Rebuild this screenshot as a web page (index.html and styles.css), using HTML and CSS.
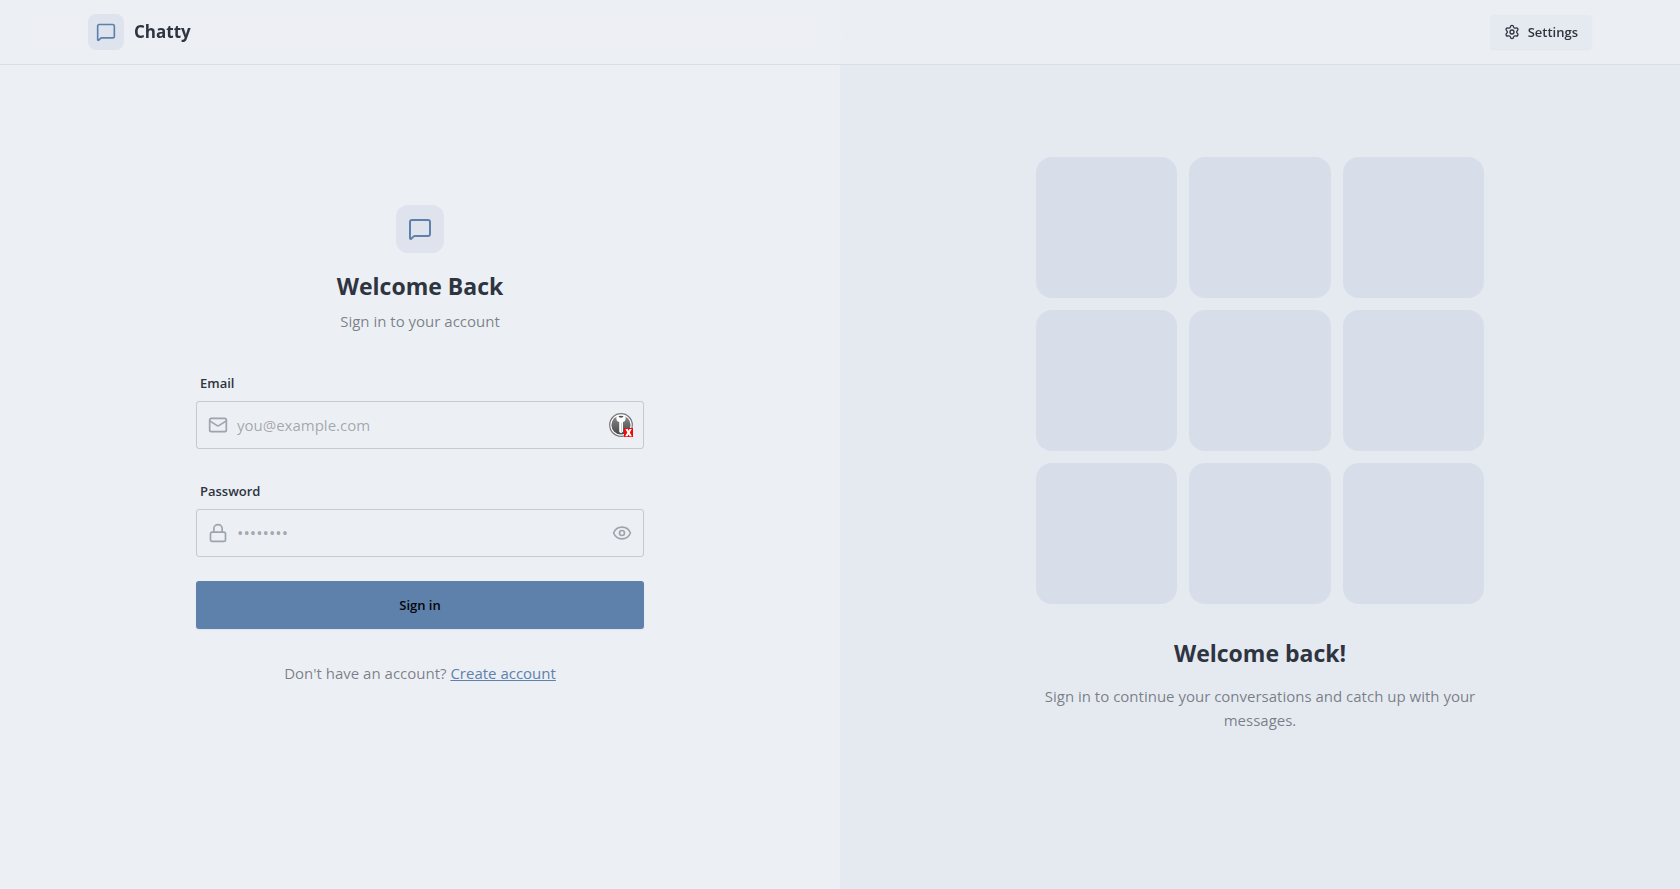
FILE: index.html
```html
<!DOCTYPE html>
<html lang="en">
<head>
<meta charset="utf-8">
<meta name="viewport" content="width=device-width, initial-scale=1">
<title>Chatty</title>
<link rel="stylesheet" href="styles.css">
</head>
<body>
<header class="navbar">
  <div class="navbar-inner">
    <a class="brand" href="#">
      <span class="brand-mark">
        <svg class="icon icon-md" viewBox="0 0 24 24"><path d="M22 17a2 2 0 0 1-2 2H6.83a2 2 0 0 0-1.42.59l-2.2 2.2A.71.71 0 0 1 2 21.29V5a2 2 0 0 1 2-2h16a2 2 0 0 1 2 2z"/></svg>
      </span>
      <span class="brand-name">Chatty</span>
    </a>
    <button class="settings" type="button">
      <svg class="icon icon-sm" viewBox="0 0 24 24"><path d="M9.67 4.14a2.34 2.34 0 0 1 4.66 0 2.34 2.34 0 0 0 3.32 1.91 2.34 2.34 0 0 1 2.33 4.03 2.34 2.34 0 0 0 0 3.84 2.34 2.34 0 0 1-2.33 4.03 2.34 2.34 0 0 0-3.32 1.91 2.34 2.34 0 0 1-4.66 0 2.34 2.34 0 0 0-3.32-1.91 2.34 2.34 0 0 1-2.33-4.03 2.34 2.34 0 0 0 0-3.84 2.34 2.34 0 0 1 2.33-4.03 2.34 2.34 0 0 0 3.32-1.91"/><circle cx="12" cy="12" r="3"/></svg>
      <span>Settings</span>
    </button>
  </div>
</header>
<main class="split">
  <section class="pane">
    <div class="content">
      <div class="intro">
        <span class="intro-mark">
          <svg class="icon icon-lg" viewBox="0 0 24 24"><path d="M22 17a2 2 0 0 1-2 2H6.83a2 2 0 0 0-1.42.59l-2.2 2.2A.71.71 0 0 1 2 21.29V5a2 2 0 0 1 2-2h16a2 2 0 0 1 2 2z"/></svg>
        </span>
        <h1 class="title">Welcome Back</h1>
        <p class="muted">Sign in to your account</p>
      </div>
      <form class="form">
        <div class="field">
          <label class="label" for="email">Email</label>
          <div class="control">
            <svg class="icon icon-md lead" viewBox="0 0 24 24"><rect width="20" height="16" x="2" y="4" rx="2"/><path d="m22 7-8.97 5.7a1.94 1.94 0 0 1-2.06 0L2 7"/></svg>
            <input class="input" id="email" type="email" placeholder="you@example.com">
            <svg class="vault" viewBox="0 0 24 24">
              <defs><linearGradient id="disc" x1="0" y1="0" x2="0" y2="1"><stop offset="0" stop-color="#8a8a8a"/><stop offset="1" stop-color="#484848"/></linearGradient></defs>
              <circle cx="12" cy="12" r="11.3" fill="#fff" stroke="#777" stroke-width="1.2"/>
              <circle cx="12" cy="12" r="9.6" fill="url(#disc)"/>
              <path d="M7.4 3.4Q12 1.6 16.6 3.4V6.4Q16.2 8.4 14 9V18.8L12 20.2 10.2 19V9Q7.8 8.4 7.4 6.4Z" fill="#fff"/>
              <path d="M9.8 3h4.4v1q-2.2 1.6-4.4 0z" fill="#555"/>
              <path d="M12.6 10v9" stroke="#bbb" stroke-width=".8"/>
              <rect x="15" y="15" width="9" height="9" fill="#f00b0b"/>
              <path d="M16.4 16h2.4l.8 1.8.9-1.8h2.3l-2 3.5 2.1 3.7h-2.4l-1-2-1 2h-2.3l2.1-3.7z" fill="#fff"/>
            </svg>
          </div>
        </div>
        <div class="field">
          <label class="label" for="password">Password</label>
          <div class="control">
            <svg class="icon icon-md lead" viewBox="0 0 24 24"><rect width="18" height="11" x="3" y="11" rx="2"/><path d="M7 11V7a5 5 0 0 1 10 0v4"/></svg>
            <input class="input input-password" id="password" type="password" placeholder="••••••••">
            <button class="reveal" type="button" aria-label="Show password">
              <svg class="icon icon-md" viewBox="0 0 24 24"><path d="M2.06 12.35a1 1 0 0 1 0-.7 10.75 10.75 0 0 1 19.88 0 1 1 0 0 1 0 .7 10.75 10.75 0 0 1-19.88 0"/><circle cx="12" cy="12" r="3"/></svg>
            </button>
          </div>
        </div>
        <button class="submit" type="submit">Sign in</button>
      </form>
      <p class="muted signup">Don't have an account? <a class="link" href="#">Create account</a></p>
    </div>
  </section>
  <section class="pane pane-pattern">
    <div class="content">
      <div class="tiles">
        <div class="tile"></div><div class="tile"></div><div class="tile"></div>
        <div class="tile"></div><div class="tile"></div><div class="tile"></div>
        <div class="tile"></div><div class="tile"></div><div class="tile"></div>
      </div>
      <h2 class="title pattern-title">Welcome back!</h2>
      <p class="muted">Sign in to continue your conversations and catch up with your messages.</p>
    </div>
  </section>
</main>
</body>
</html>
```

FILE: styles.css
```css
:root {
  --base-100: #eceff4;
  --base-200: #e5e9f0;
  --base-300: #d8dee9;
  --ink: #2e3440;
  --primary: #5e81ac;
}

*, *::before, *::after { box-sizing: border-box; }

body {
  margin: 0;
  background: var(--base-100);
  color: var(--ink);
  font-family: "Open Sans", "Noto Sans", sans-serif;
  font-size: 15px;
  line-height: 24px;
}

h1, h2, p { margin: 0; }
button, input { font: inherit; color: inherit; }
button { cursor: pointer; }

.icon {
  display: block;
  flex: none;
  fill: none;
  stroke: currentColor;
  stroke-width: 2;
  stroke-linecap: round;
  stroke-linejoin: round;
}
.icon-sm { width: 16px; height: 16px; }
.icon-md { width: 20px; height: 20px; }
.icon-lg { width: 24px; height: 24px; }

.navbar {
  position: fixed;
  inset: 0 0 auto;
  z-index: 10;
  border-bottom: 1px solid var(--base-300);
  background: rgb(236 239 244 / 80%);
  backdrop-filter: blur(16px);
}
.navbar-inner {
  display: flex;
  align-items: center;
  justify-content: space-between;
  max-width: 1536px;
  height: 64px;
  margin: 0 auto;
  padding: 0 16px;
}
.brand {
  display: flex;
  align-items: center;
  gap: 10px;
  color: inherit;
  text-decoration: none;
}
.brand-mark, .intro-mark {
  display: grid;
  place-items: center;
  background: rgb(94 129 172 / 10%);
  color: var(--primary);
}
.brand-mark { width: 36px; height: 36px; border-radius: 8px; }
.brand-name { font-size: 17px; font-weight: 700; }
.settings {
  display: flex;
  align-items: center;
  gap: 8px;
  height: 34px;
  padding: 0 14px;
  border: 0;
  border-radius: 4px;
  background: var(--base-200);
  box-shadow: 0 1px 2px rgb(0 0 0 / 4%);
  font-size: 13px;
  font-weight: 600;
}

.split {
  display: grid;
  grid-template-columns: 1fr 1fr;
  min-height: 100vh;
}
.pane {
  display: flex;
  align-items: center;
  justify-content: center;
  padding: 48px;
}
.pane-pattern { background: var(--base-200); text-align: center; }
.content { width: 100%; max-width: 448px; }

.intro {
  display: flex;
  flex-direction: column;
  align-items: center;
  margin-bottom: 32px;
}
.intro-mark { width: 48px; height: 48px; border-radius: 12px; }
.title { font-size: 23px; font-weight: 700; line-height: 34px; }
.intro .title { margin: 16px 0 6px; }
.muted { color: rgb(46 52 64 / 60%); }

.form { display: grid; gap: 24px; }
.label {
  display: block;
  padding: 8px 4px;
  font-size: 13px;
  font-weight: 600;
  line-height: 20px;
}
.control { position: relative; }
.input {
  display: block;
  width: 100%;
  height: 48px;
  padding: 0 40px;
  border: 1px solid rgb(46 52 64 / 20%);
  border-radius: 3px;
  background: transparent;
}
.input::placeholder { color: rgb(46 52 64 / 40%); opacity: 1; }
.input-password { font-size: 17px; }
.lead {
  position: absolute;
  top: 14px;
  left: 12px;
  opacity: 0.4;
}
.vault {
  position: absolute;
  top: 12px;
  right: 11px;
  width: 24px;
  height: 24px;
  fill: none;
}
.reveal {
  position: absolute;
  top: 14px;
  right: 12px;
  padding: 0;
  border: 0;
  background: none;
}
.reveal .icon { opacity: 0.4; }
.submit {
  height: 48px;
  border: 0;
  border-radius: 3px;
  background: var(--primary);
  box-shadow: 0 1px 2px rgb(0 0 0 / 5%);
  color: #03060b;
  font-size: 13px;
  font-weight: 600;
}
.signup { margin-top: 32px; text-align: center; }
.link { color: var(--primary); }

.tiles {
  display: grid;
  grid-template-columns: repeat(3, 1fr);
  gap: 12px;
}
.tile {
  aspect-ratio: 1;
  border-radius: 16px;
  background: var(--base-300);
}
.pattern-title { margin: 32px 0 14px; }
```
